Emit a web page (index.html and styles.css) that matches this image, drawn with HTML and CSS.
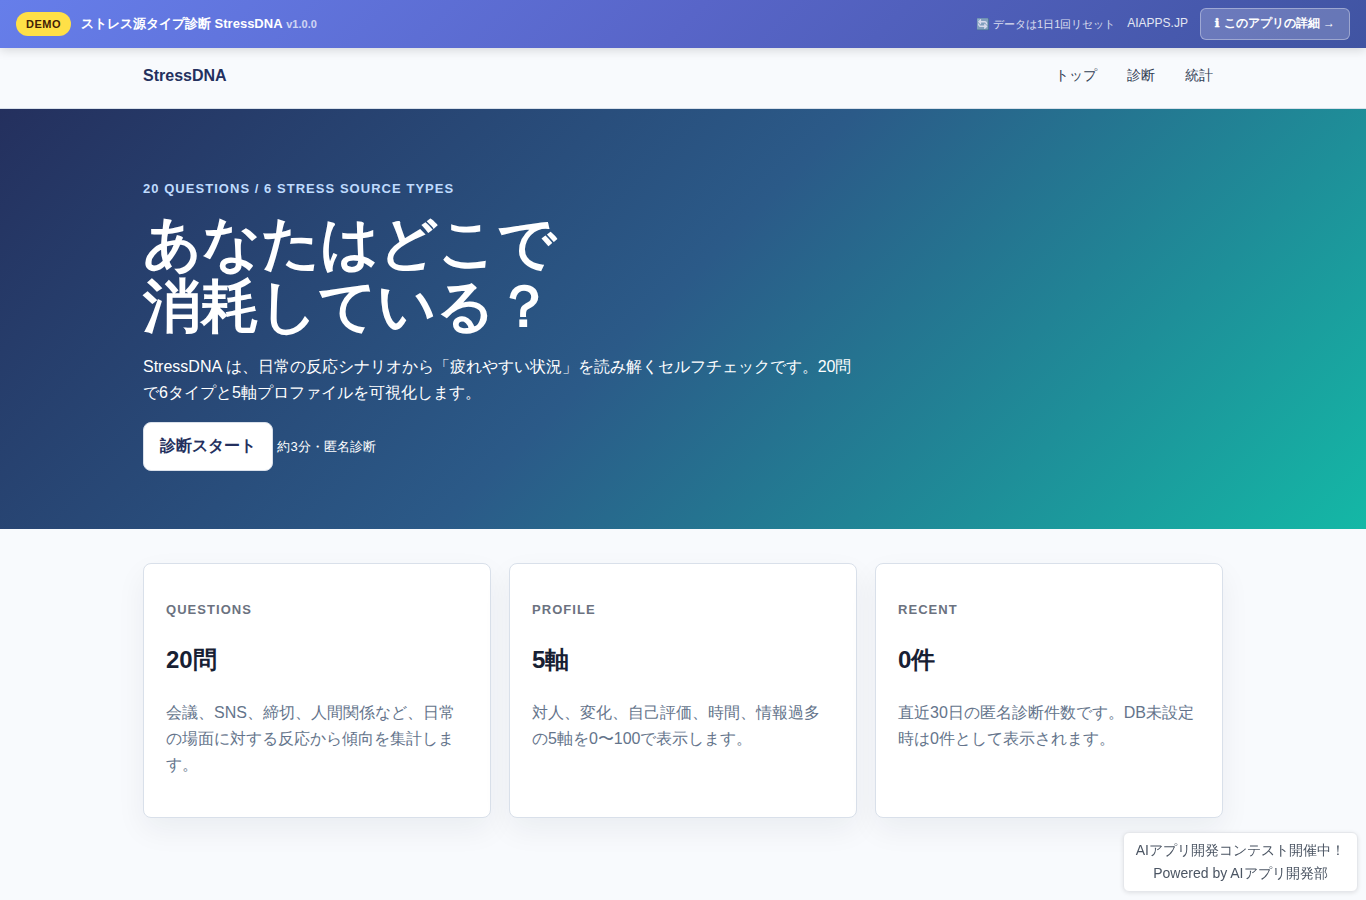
FILE: index.html
```html
<!DOCTYPE html>
<html lang="ja">
<head>
  <meta charset="UTF-8" />
  <meta name="viewport" content="width=device-width, initial-scale=1.0"/>
  <title>StressDNA</title>
  <link rel="stylesheet" href="styles.css">
</head>

<body>
  <!-- Demo bar -->
  <div class="demo-bar">
    <div class="demo-left">
      <span class="demo-badge">DEMO</span>
      <span class="demo-title">ストレス源タイプ診断 StressDNA <span class="demo-version">v1.0.0</span></span>
    </div>
    <div class="demo-right">
      <span class="demo-reset">🔄 データは1日1回リセット</span>
      <a href="#" class="demo-link">AIAPPS.JP</a>
      <a href="#" class="demo-btn"><span class="info">ℹ</span> このアプリの詳細 →</a>
    </div>
  </div>

  <header class="site-header">
    <div class="container nav">
      <a href="#" class="brand">StressDNA</a>
      <nav class="nav-links">
        <a href="#">トップ</a>
        <a href="#">診断</a>
        <a href="#">統計</a>
      </nav>
    </div>
  </header>

  <main>
    <section class="hero">
      <div class="container">
        <p class="eyebrow">20 Questions / 6 Stress Source Types</p>
        <h1>あなたはどこで<br>消耗している？</h1>
        <p class="lead">StressDNA は、日常の反応シナリオから「疲れやすい状況」を読み解くセルフチェックです。20問で6タイプと5軸プロファイルを可視化します。</p>
        <a href="#" class="btn">診断スタート</a>
        <span class="hero-note">約3分・匿名診断</span>
      </div>
    </section>

    <section class="container cards">
      <article class="card">
        <p class="eyebrow">Questions</p>
        <h2>20問</h2>
        <p class="muted">会議、SNS、締切、人間関係など、日常の場面に対する反応から傾向を集計します。</p>
      </article>
      <article class="card">
        <p class="eyebrow">Profile</p>
        <h2>5軸</h2>
        <p class="muted">対人、変化、自己評価、時間、情報過多の5軸を0〜100で表示します。</p>
      </article>
      <article class="card">
        <p class="eyebrow">Recent</p>
        <h2>0件</h2>
        <p class="muted">直近30日の匿名診断件数です。DB未設定時は0件として表示されます。</p>
      </article>
    </section>
  </main>

  <!-- Floating credit -->
  <div class="credit">
    <a href="#">AIアプリ開発コンテスト開催中！</a>
    <a href="#">Powered by AIアプリ開発部</a>
  </div>
</body>
</html>
```
FILE: styles.css
```css
* {
  box-sizing: border-box;
}

body {
  margin: 0;
  font-family: "Liberation Sans", sans-serif;
  line-height: 1.65;
  color: #172033;
  background: #f8fafd;
}

a {
  color: inherit;
  text-decoration: none;
}

.container {
  width: 1080px;
  max-width: 100%;
  margin: 0 auto;
}

/* Demo bar */
.demo-bar {
  position: relative;
  z-index: 10;
  display: flex;
  align-items: center;
  justify-content: space-between;
  height: 48px;
  padding: 0 16px;
  color: #fff;
  background: linear-gradient(135deg, #667eea 0%, #5865c8 50%, #4054a2 100%);
  box-shadow: 0 2px 10px rgba(0, 0, 0, 0.15);
}

.demo-left,
.demo-right {
  display: flex;
  align-items: center;
}

.demo-left {
  gap: 10px;
}

.demo-right {
  gap: 12px;
}

.demo-badge {
  padding: 3px 10px;
  border-radius: 20px;
  background: #ffe047;
  color: #422006;
  font-size: 11px;
  font-weight: bold;
  letter-spacing: 0.5px;
}

.demo-title {
  font-size: 13px;
  font-weight: bold;
}

.demo-version {
  margin-left: 0.6px;
  font-size: 11px;
  opacity: 0.7;
}

.demo-reset {
  font-size: 11px;
  opacity: 0.8;
}

.demo-link {
  font-size: 12px;
  opacity: 0.85;
}

.demo-btn {
  padding: 5px 14px;
  border: 1px solid rgba(255, 255, 255, 0.35);
  border-radius: 6px;
  background: rgba(255, 255, 255, 0.2);
  font-size: 12px;
  font-weight: bold;
}

.info {
  margin-right: 0.8px;
  font-family: "DejaVu Sans", sans-serif;
  -webkit-text-stroke: 0.6px #fff;
}

/* Header */
.site-header {
  height: 61px;
  padding-top: 14px;
  border-bottom: 1px solid #d9e0ea;
}

.nav {
  display: flex;
  align-items: flex-start;
  justify-content: space-between;
}

.brand {
  padding-top: 1px;
  color: #24305e;
  font-weight: bold;
}

.nav-links {
  display: flex;
  gap: 10px;
  padding-top: 1.6px;
}

.nav-links a {
  padding: 0 10px;
  color: #334155;
  font-size: 14px;
}

/* Hero */
.hero {
  height: 420px;
  padding-top: 56px;
  color: #fff;
  background: linear-gradient(135deg, #24305e 0%, #2b5a88 48%, #14b8a6 100%);
}

.eyebrow {
  margin: 13px 0;
  color: #6b7280;
  font-size: 13px;
  font-weight: bold;
  letter-spacing: 0.08em;
  text-transform: uppercase;
}

.hero .eyebrow {
  color: #bfdbfe;
}

.hero h1 {
  margin: 10px 0 16px;
  font-size: 58px;
  line-height: 1.08;
}

.lead {
  max-width: 720px;
  margin: 16px 0;
}

.btn {
  display: inline-block;
  padding: 10px 16px;
  border: 1px solid #d9e0ea;
  border-radius: 8px;
  background: #fff;
  color: #24305e;
  font-weight: bold;
}

.hero-note {
  font-size: 13px;
}

/* Cards */
.cards {
  display: grid;
  grid-template-columns: repeat(3, 1fr);
  gap: 18px;
  padding: 34px 0;
}

.card {
  padding: 22px;
  border: 1px solid #d9e0ea;
  border-radius: 8px;
  background: #fff;
  box-shadow: 0 12px 30px rgba(23, 32, 51, 0.06);
}

.card h2 {
  margin: 19.8px 0;
  font-size: 24px;
}

.muted {
  margin: 16px 0;
  color: #64748b;
}

/* Credit */
.credit {
  position: fixed;
  right: 8px;
  bottom: 8px;
  display: flex;
  flex-direction: column;
  padding: 6px 12px;
  border: 1px solid #e5e7eb;
  border-radius: 6px;
  background: #fff;
  color: #4b5563;
  font-size: 14px;
  text-align: center;
  box-shadow: 0 1px 4px rgba(0, 0, 0, 0.1);
}
```
